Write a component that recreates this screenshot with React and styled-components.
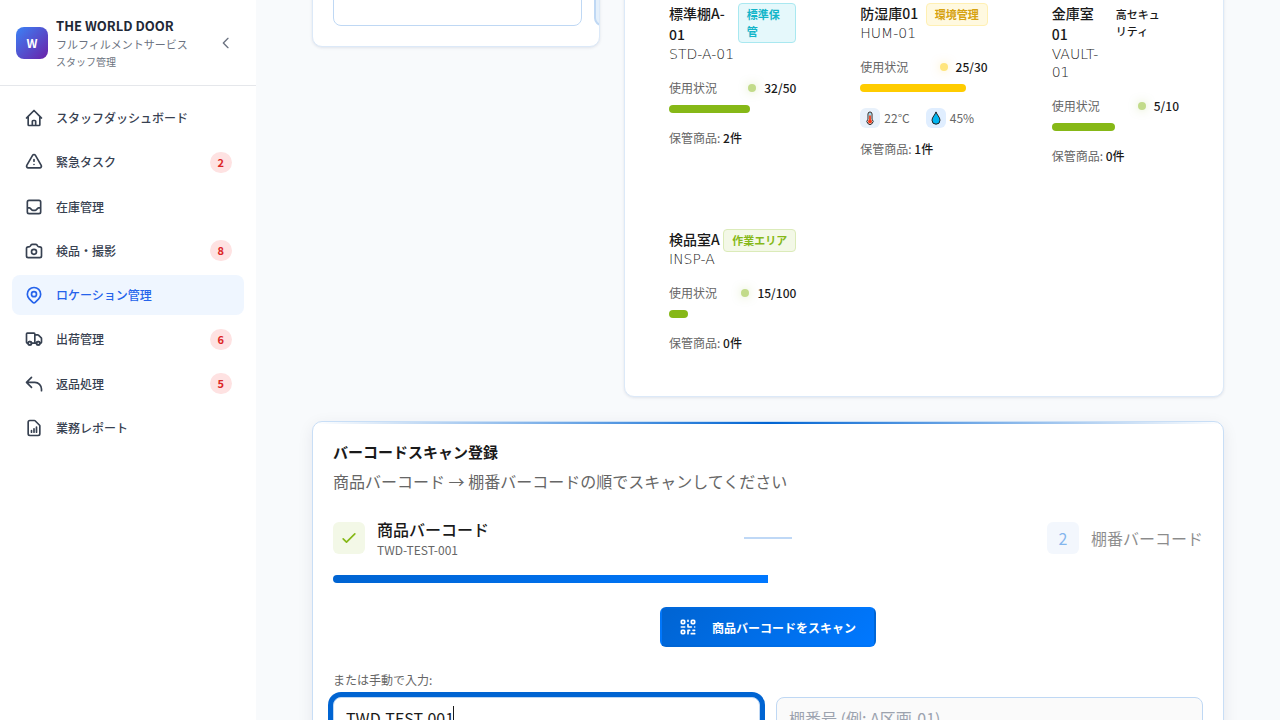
import React from "react";
import styled, { createGlobalStyle } from "styled-components";
import {
  HiOutlineHome,
  HiOutlineExclamation,
  HiOutlineInbox,
  HiOutlineCamera,
  HiOutlineLocationMarker,
  HiOutlineTruck,
  HiOutlineReply,
  HiOutlineDocumentReport,
  HiOutlineChevronLeft,
  HiOutlineCheck,
  HiOutlineQrcode,
} from "react-icons/hi";

const GlobalStyle = createGlobalStyle`
  *, *::before, *::after { box-sizing: border-box; }
  body {
    margin: 0;
    background: #f8fafc;
    color: #1a1a1a;
    font-family: "Noto Sans CJK JP", "Noto Sans", sans-serif;
    font-size: 12px;
    line-height: 18px;
  }
  h1, h2, h3, p, ul { margin: 0; padding: 0; }
  ul { list-style: none; }
  button, input { font-family: inherit; }
`;

const Page = styled.div`
  display: flex;
  height: 100vh;
  overflow: clip;
`;

const Sidebar = styled.aside`
  flex: 0 0 256px;
  background: #fff;
`;

const Brand = styled.header`
  display: flex;
  align-items: center;
  gap: 8px;
  padding: 16px 16px 15px;
  border-bottom: 1px solid #e5e7eb;
`;

const Logo = styled.div`
  display: grid;
  place-items: center;
  width: 32px;
  height: 32px;
  border-radius: 8px;
  background: linear-gradient(135deg, #3b82f6, #6b21a8);
  color: #fff;
  font-weight: 700;
`;

const BrandText = styled.div`
  flex: 1;
`;

const BrandName = styled.h1`
  font-size: 13px;
  line-height: 20px;
  font-weight: 700;
  color: #1f2937;
`;

const BrandLine = styled.p`
  font-size: ${(p) => (p.$small ? "10px" : "11px")};
  line-height: 17px;
  color: #6b7280;
`;

const CollapseButton = styled.button`
  display: grid;
  place-items: center;
  width: 28px;
  height: 28px;
  padding: 0;
  border: 0;
  background: none;
  color: #6b7280;
  font-size: 16px;
`;

const Menu = styled.ul`
  display: flex;
  flex-direction: column;
  justify-content: space-between;
  min-height: 350px;
  margin: 12px;
`;

const MenuLink = styled.a`
  display: flex;
  align-items: center;
  gap: 12px;
  height: 40px;
  padding: 0 12px;
  border-radius: 8px;
  background: ${(p) => (p.$active ? "#eff6ff" : "transparent")};
  color: ${(p) => (p.$active ? "#2563eb" : "#374151")};
  font-weight: 500;
  text-decoration: none;

  svg { width: 20px; height: 20px; }
`;

const Count = styled.span`
  margin-left: auto;
  padding: 2px 8px;
  border-radius: 11px;
  background: #fee2e2;
  color: #dc2626;
  font-size: 11px;
  line-height: 17px;
  font-weight: 700;
`;

const Main = styled.main`
  flex: 1;
  min-width: 0;
  overflow: clip;
  padding: 0 56px;
`;

const Content = styled.div`
  display: grid;
  grid-template-columns: repeat(12, 1fr);
  align-items: start;
  gap: 24px;
  margin-top: -42px;
`;

const Card = styled.section`
  grid-column: span ${(p) => p.$span};
  min-width: 0;
  overflow: clip;
  padding: 20px;
  border: 1px solid #dce9f8;
  border-radius: 10px;
  background: #fff;
  box-shadow: 0 1px 3px rgba(0, 30, 80, 0.1);
`;

const TileRow = styled.div`
  display: flex;
  gap: 12px;
`;

const Tile = styled.div`
  flex: 0 0 249px;
  height: 47px;
  border: ${(p) => (p.$selected ? "2px" : "1px")} solid #bfd8f4;
  border-radius: 8px;
  background: ${(p) => (p.$selected ? "#e5f0fb" : "#fff")};
`;

const ShelfGrid = styled.div`
  display: grid;
  grid-template-columns: repeat(3, 1fr);
  gap: 16px;
`;

const ShelfBox = styled.article`
  min-width: 0;
  padding: 24px;
`;

const ShelfHead = styled.div`
  display: flex;
  align-items: flex-start;
  justify-content: space-between;
  margin-bottom: 16px;
`;

const ShelfName = styled.h3`
  font-size: 14px;
  line-height: 21px;
  font-weight: 500;
`;

const ShelfCode = styled.p`
  font-family: "DejaVu Sans", sans-serif;
  font-size: 14px;
  font-weight: 200;
  color: #1a1a1a;
`;

const tones = {
  cyan: ["#e5f8fb", "#a9e8f0", "#12b5c9"],
  amber: ["#fff9e0", "#fff0b3", "#d6a210"],
  green: ["#f3f8e7", "#dbebb9", "#86b817"],
  plain: ["transparent", "transparent", "#1a1a1a"],
};

const Tag = styled.span`
  flex-shrink: 2;
  padding: 2px 8px;
  border: 1px solid ${(p) => tones[p.$tone][1]};
  border-radius: 4px;
  background: ${(p) => tones[p.$tone][0]};
  color: ${(p) => tones[p.$tone][2]};
  font-size: 11px;
  line-height: 17px;
  font-weight: ${(p) => (p.$tone === "plain" ? 500 : 700)};
`;

const Usage = styled.div`
  display: flex;
  align-items: center;
  justify-content: space-between;
  margin-bottom: 8px;
  color: #666;
`;

const UsageValue = styled.span`
  display: flex;
  align-items: center;
  gap: 8px;
  color: #1a1a1a;
  font-weight: 500;
`;

const Dot = styled.span`
  width: 8px;
  height: 8px;
  border-radius: 50%;
  background: ${(p) => p.$color};
  box-shadow: 0 0 8px ${(p) => p.$color}80;
  opacity: 0.5;
`;

const Bar = styled.div`
  height: 8px;
  border-radius: 4px;
  background: ${(p) => p.$color};
`;

const Climate = styled.div`
  display: flex;
  gap: 16px;
  margin: 16px 0 12px;
  color: #666;
`;

const Reading = styled.span`
  display: flex;
  align-items: center;
  gap: 4px;
`;

const ReadingIcon = styled.span`
  display: grid;
  place-items: center;
  width: 20px;
  height: 20px;
  border-radius: 6px;
  background: ${(p) => p.$bg};
`;

const Stock = styled.p`
  margin-top: ${(p) => (p.$tight ? "0" : "16px")};
  color: #666;

  strong { color: #1a1a1a; font-weight: 500; }
`;

const ScanCard = styled(Card)`
  position: relative;
  border-color: #c8def6;
  box-shadow: 0 4px 16px rgba(0, 20, 60, 0.08);

  &::before {
    content: "";
    position: absolute;
    top: 0;
    left: 0;
    right: 0;
    height: 2px;
    background: linear-gradient(90deg, transparent, #0064d2, transparent);
  }
`;

const ScanTitle = styled.h2`
  margin-bottom: 8px;
  font-size: 15px;
  line-height: 19px;
  font-weight: 700;
`;

const ScanLead = styled.p`
  font-size: 16px;
  line-height: 24px;
  color: #666;
`;

const Steps = styled.div`
  display: flex;
  align-items: center;
  justify-content: space-between;
  margin: 24px 0 16px;
`;

const Step = styled.div`
  display: flex;
  align-items: center;
  gap: 12px;
  opacity: ${(p) => (p.$pending ? 0.5 : 1)};
`;

const StepMark = styled.span`
  display: grid;
  place-items: center;
  width: 32px;
  height: 32px;
  border-radius: 6px;
  background: ${(p) => (p.$done ? "#f3f8e7" : "#e8f1fc")};
  color: ${(p) => (p.$done ? "#86b817" : "#0a6fdc")};
  font-size: 16px;

  svg { width: 20px; height: 20px; }
`;

const StepName = styled.p`
  font-size: 16px;
  line-height: 24px;
  font-weight: ${(p) => (p.$done ? 500 : 400)};
`;

const StepNote = styled.p`
  color: #666;
`;

const Connector = styled.span`
  width: 48px;
  height: 2px;
  background: #bfd8f6;
`;

const Progress = styled.div`
  height: 8px;
  overflow: hidden;
  border-radius: 4px;
`;

const ProgressFill = styled.div`
  height: 100%;
  background: linear-gradient(90deg, #0064d2, #0078ff);
`;

const ScanButton = styled.button`
  display: flex;
  align-items: center;
  gap: 14px;
  height: 40px;
  margin: 24px auto;
  padding: 0 18px 0 16px;
  border: 2px solid transparent;
  border-radius: 6px;
  background: linear-gradient(135deg, #0064d2, #0078ff);
  color: #fff;
  font-size: 12px;
  font-weight: 700;

  svg { width: 20px; height: 20px; }
`;

const ManualLabel = styled.label`
  display: block;
  margin-bottom: 8px;
  color: #666;
`;

const Fields = styled.div`
  display: grid;
  grid-template-columns: 1fr 1fr;
  gap: 16px;
`;

const FieldWrap = styled.div`
  position: relative;
`;

const Field = styled.input`
  display: block;
  width: 100%;
  height: 42px;
  padding: 0 12px;
  border: 1px solid #bfd8f4;
  border-radius: 8px;
  background: #fff;
  color: #1a1a1a;
  font-size: 16px;
  outline: 0;
  caret-color: transparent;

  &:focus { box-shadow: 0 0 0 5px #0064d2; }
  &:disabled { background: #fafafa; }
  &::placeholder { color: #9ca3af; }
`;

const Caret = styled.span`
  position: absolute;
  top: 9px;
  left: 120px;
  width: 1px;
  height: 24px;
  background: #1a1a1a;
  pointer-events: none;
`;

function Thermometer() {
  return (
    <svg width="14" height="14" viewBox="0 0 14 14" aria-hidden="true">
      <path d="M5 3a2 2 0 0 1 4 0v5.200a3 3 0 1 1-4 0z" fill="#fff" stroke="#222" strokeWidth="1" />
      <path d="M7 2v3" stroke="#7fd0ee" strokeWidth="1.6" />
      <path d="M7 4.6v5" stroke="#f03a17" strokeWidth="1.8" />
      <circle cx="7" cy="10.4" r="2" fill="#f03a17" />
    </svg>
  );
}

function Droplet() {
  return (
    <svg width="14" height="14" viewBox="0 0 14 14" aria-hidden="true">
      <path
        d="M7 .9C6.3 3.6 3 6.3 3 9.2a4 4 0 0 0 8 0C11 6.3 7.7 3.6 7 .9z"
        fill="#00b4f0"
        stroke="#222"
        strokeWidth="1"
        strokeLinejoin="round"
      />
    </svg>
  );
}

const menu = [
  { label: "スタッフダッシュボード", Icon: HiOutlineHome },
  { label: "緊急タスク", Icon: HiOutlineExclamation, count: 2 },
  { label: "在庫管理", Icon: HiOutlineInbox },
  { label: "検品・撮影", Icon: HiOutlineCamera, count: 8 },
  { label: "ロケーション管理", Icon: HiOutlineLocationMarker, active: true },
  { label: "出荷管理", Icon: HiOutlineTruck, count: 6 },
  { label: "返品処理", Icon: HiOutlineReply, count: 5 },
  { label: "業務レポート", Icon: HiOutlineDocumentReport },
];

const shelves = [
  { name: "標準棚A-01", code: "STD-A-01", tag: "標準保管", tone: "cyan", used: 32, max: 50, items: 2 },
  {
    name: "防湿庫01", code: "HUM-01", tag: "環境管理", tone: "amber", used: 25, max: 30, items: 1,
    climate: { temperature: "22°C", humidity: "45%" },
  },
  { name: "金庫室01", code: "VAULT-01", tag: "高セキュリティ", tone: "plain", used: 5, max: 10, items: 0 },
  { name: "検品室A", code: "INSP-A", tag: "作業エリア", tone: "green", used: 15, max: 100, items: 0 },
];

function Shelf({ name, code, tag, tone, used, max, items, climate }) {
  const ratio = used / max;
  const color = ratio > 0.7 ? "#ffcc00" : "#86b817";
  return (
    <ShelfBox>
      <ShelfHead>
        <div>
          <ShelfName>{name}</ShelfName>
          <ShelfCode>{code}</ShelfCode>
        </div>
        <Tag $tone={tone}>{tag}</Tag>
      </ShelfHead>
      <Usage>
        <span>使用状況</span>
        <UsageValue>
          <Dot $color={color} />
          {used}/{max}
        </UsageValue>
      </Usage>
      <Bar $color={color} style={{ width: `${ratio * 100}%` }} />
      {climate && (
        <Climate>
          <Reading>
            <ReadingIcon $bg="#e8f1fb"><Thermometer /></ReadingIcon>
            {climate.temperature}
          </Reading>
          <Reading>
            <ReadingIcon $bg="#e0eeff"><Droplet /></ReadingIcon>
            {climate.humidity}
          </Reading>
        </Climate>
      )}
      <Stock $tight={Boolean(climate)}>
        保管商品: <strong>{items}件</strong>
      </Stock>
    </ShelfBox>
  );
}

export default function App() {
  return (
    <>
      <GlobalStyle />
      <Page>
        <Sidebar>
          <Brand>
            <Logo>W</Logo>
            <BrandText>
              <BrandName>THE WORLD DOOR</BrandName>
              <BrandLine>フルフィルメントサービス</BrandLine>
              <BrandLine $small>スタッフ管理</BrandLine>
            </BrandText>
            <CollapseButton type="button" aria-label="サイドバーを閉じる">
              <HiOutlineChevronLeft />
            </CollapseButton>
          </Brand>
          <nav>
            <Menu>
              {menu.map(({ label, Icon, count, active }) => (
                <li key={label}>
                  <MenuLink href="#" $active={active} aria-current={active ? "page" : undefined}>
                    <Icon />
                    {label}
                    {count && <Count>{count}</Count>}
                  </MenuLink>
                </li>
              ))}
            </Menu>
          </nav>
        </Sidebar>
        <Main>
          <Content>
            <Card $span={4}>
              <TileRow>
                <Tile />
                <Tile $selected />
              </TileRow>
            </Card>
            <Card $span={8}>
              <ShelfGrid>
                {shelves.map((shelf) => (
                  <Shelf key={shelf.code} {...shelf} />
                ))}
              </ShelfGrid>
            </Card>
            <ScanCard $span={12}>
              <ScanTitle>バーコードスキャン登録</ScanTitle>
              <ScanLead>商品バーコード → 棚番バーコードの順でスキャンしてください</ScanLead>
              <Steps>
                <Step>
                  <StepMark $done><HiOutlineCheck /></StepMark>
                  <div>
                    <StepName $done>商品バーコード</StepName>
                    <StepNote>TWD-TEST-001</StepNote>
                  </div>
                </Step>
                <Connector />
                <Step $pending>
                  <StepMark>2</StepMark>
                  <StepName>棚番バーコード</StepName>
                </Step>
              </Steps>
              <Progress>
                <ProgressFill style={{ width: "50%" }} />
              </Progress>
              <ScanButton type="button">
                <HiOutlineQrcode />
                商品バーコードをスキャン
              </ScanButton>
              <ManualLabel htmlFor="product-code">または手動で入力:</ManualLabel>
              <Fields>
                <FieldWrap>
                  <Field id="product-code" defaultValue="TWD-TEST-001" autoFocus />
                  <Caret />
                </FieldWrap>
                <FieldWrap>
                  <Field aria-label="棚番号" placeholder="棚番号 (例: A区画-01)" disabled />
                </FieldWrap>
              </Fields>
            </ScanCard>
          </Content>
        </Main>
      </Page>
    </>
  );
}
